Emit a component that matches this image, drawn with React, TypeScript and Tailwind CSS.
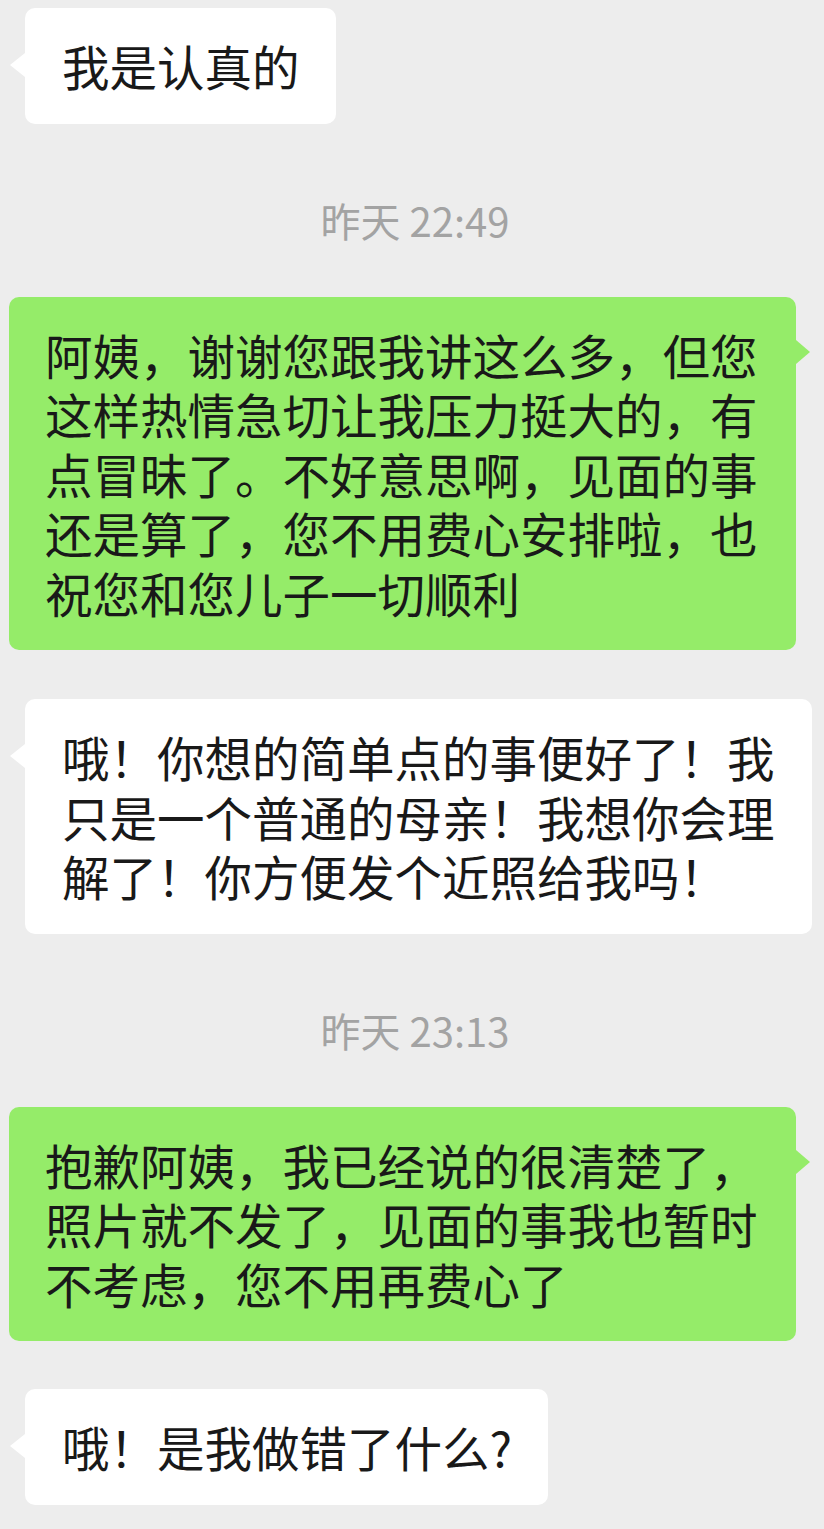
import React from "react";

type Side = "left" | "right";

function Bubble({ side, children, className = "" }: { side: Side; children: React.ReactNode; className?: string }) {
  const isLeft = side === "left";
  return (
    <div className={`relative rounded-[10px] py-[28px] text-[47.5px] leading-[59.5px] text-[#191919] ${isLeft ? "bg-white pl-[37px] pr-[36px]" : "bg-[#95ec69] pl-[36px] pr-[36px]"} ${className}`}>
      {isLeft ? (
        <span className="absolute left-[-15px] top-[45px] h-0 w-0 border-y-[12px] border-r-[15px] border-y-transparent border-r-white" />
      ) : (
        <span className="absolute right-[-14px] top-[43px] h-0 w-0 border-y-[12px] border-l-[14px] border-y-transparent border-l-[#95ec69]" />
      )}
      {children}
    </div>
  );
}

function Time({ children, className = "" }: { children: React.ReactNode; className?: string }) {
  return (
    <div className={`text-center text-[40px] leading-[44px] text-[#a3a3a3] ${className}`}>{children}</div>
  );
}

export default function App() {
  return (
    <div
      className="flex min-h-[1529px] w-[824px] flex-col bg-[#ededed] pt-[8px]"
      style={{ fontFamily: '"Noto Sans CJK SC", "Noto Sans", sans-serif' }}
    >
      <div className="flex pl-[25px]">
        <Bubble side="left">我是认真的</Bubble>
      </div>

      <Time className="mt-[74px] mb-[55px] pl-[6px]">昨天 22:49</Time>

      <div className="flex pl-[9px]">
        <Bubble side="right" className="w-[787px]">
          阿姨，谢谢您跟我讲这么多，但您这样热情急切让我压力挺大的，有点冒昧了。不好意思啊，见面的事还是算了，您不用费心安排啦，也祝您和您儿子一切顺利
        </Bubble>
      </div>

      <div className="mt-[49px] flex pl-[25px]">
        <Bubble side="left" className="w-[787px]">
          哦！你想的简单点的事便好了！我只是一个普通的母亲！我想你会理解了！你方便发个近照给我吗！
        </Bubble>
      </div>

      <Time className="mt-[74px] mb-[55px] pl-[6px]">昨天 23:13</Time>

      <div className="flex pl-[9px]">
        <Bubble side="right" className="w-[787px]">
          抱歉阿姨，我已经说的很清楚了，照片就不发了，见面的事我也暂时不考虑，您不用再费心了
        </Bubble>
      </div>

      <div className="mt-[48px] flex pl-[25px]">
        <Bubble side="left">哦！是我做错了什么?</Bubble>
      </div>
    </div>
  );
}
